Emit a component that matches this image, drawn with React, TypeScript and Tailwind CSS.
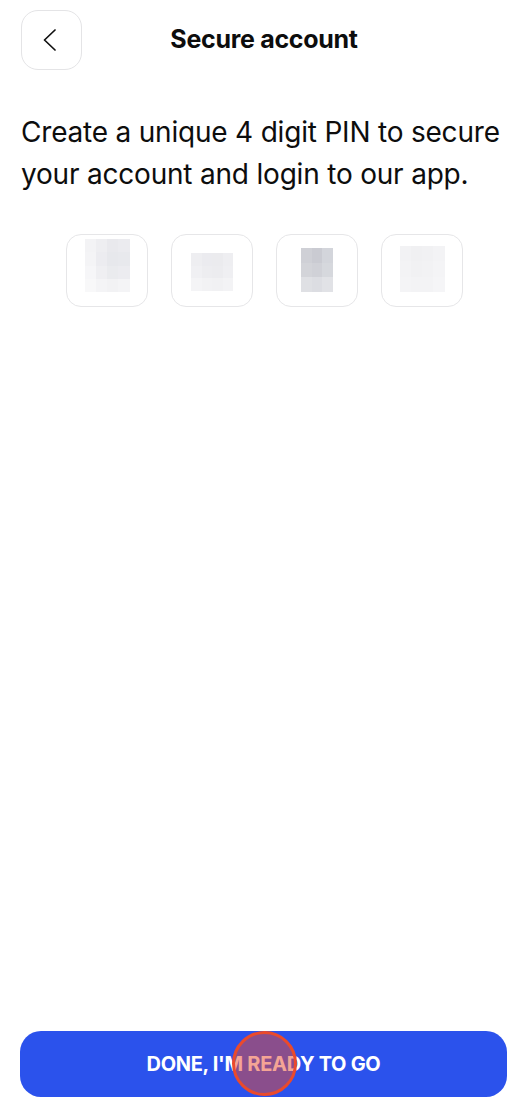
// blurred digit placeholders, rows of gray cells
const mosaics: { w: string; h: string; mt: string; cells: string[][] }[] = [
  {
    w: "w-[45px]",
    h: "h-[53px]",
    mt: "mt-[4px]",
    cells: [
      ["#f3f3f5", "#eeeef1", "#e9e9ed", "#ebebef"],
      ["#f4f4f6", "#ececf0", "#e7e8ec", "#e8e9ed"],
      ["#f6f6f8", "#efeff2", "#eaebee", "#ececf0"],
      ["#f8f8f9", "#f4f4f6", "#f2f2f4", "#f4f4f6"],
    ],
  },
  {
    w: "w-[42px]",
    h: "h-[38px]",
    mt: "mt-[18px]",
    cells: [
      ["#eeeef1", "#ebebef", "#ebebee", "#eeeef1"],
      ["#f0f0f3", "#ededf0", "#ececef", "#efeff2"],
      ["#f4f4f6", "#f2f2f4", "#f1f1f3", "#f3f3f5"],
    ],
  },
  {
    w: "w-[32px]",
    h: "h-[44px]",
    mt: "mt-[13px]",
    cells: [
      ["#cfd0d6", "#cacbd2", "#d3d5db"],
      ["#d3d4d9", "#d0d1d7", "#d6d8dd"],
      ["#dfe0e4", "#dcdde2", "#e1e2e6"],
    ],
  },
  {
    w: "w-[45px]",
    h: "h-[46px]",
    mt: "mt-[11px]",
    cells: [
      ["#f2f2f4", "#f0f0f2", "#f1f1f3", "#f3f3f5"],
      ["#f3f3f5", "#f1f1f3", "#f2f2f4", "#f4f4f6"],
      ["#f4f4f6", "#f3f3f5", "#f3f3f5", "#f5f5f7"],
    ],
  },
];

const PinBox = ({ m }: { m: (typeof mosaics)[number] }) => (
  <div className="w-[82px] h-[73px] rounded-[15px] border border-[#e6e6e8] flex justify-center bg-white">
    <div className={`${m.w} ${m.h} ${m.mt} flex flex-col`}>
      {m.cells.map((row, i) => (
        <div key={i} className="flex flex-1">
          {row.map((c, j) => (
            <div key={j} className="flex-1" style={{ backgroundColor: c }} />
          ))}
        </div>
      ))}
    </div>
  </div>
);

export default function App() {
  return (
    <div
      className="w-[528px] h-[1118px] bg-white flex flex-col text-[#0d0d0d]"
      style={{ fontFamily: "Inter, 'Liberation Sans', sans-serif" }}
    >
      {/* Header */}
      <div className="relative flex items-center h-[61px] mt-[9px] px-[21px]">
        <button className="w-[61px] h-[60px] rounded-[17px] border border-[#e4e4e6] flex items-center justify-center">
          <svg width="13" height="22" viewBox="0 0 13 22" fill="none" className="mr-[4px]">
            <polyline
              points="12,1 1.5,11 12,21"
              stroke="#111"
              strokeWidth="1.7"
              strokeLinecap="round"
              strokeLinejoin="round"
            />
          </svg>
        </button>
        <h1 className="absolute left-0 right-0 text-center text-[25px] font-bold tracking-[-0.3px] pointer-events-none">
          Secure account
        </h1>
      </div>

      {/* Description */}
      <p className="mt-[41px] px-[21px] text-[28px] leading-[42px] tracking-[-0.2px]">
        Create a unique 4 digit PIN to secure your account and login to our app.
      </p>

      {/* PIN inputs */}
      <div className="mt-[39px] flex justify-center gap-[23px] pl-[1px]">
        {mosaics.map((m, i) => (
          <PinBox key={i} m={m} />
        ))}
      </div>

      <div className="flex-1" />

      {/* CTA */}
      <div className="px-[20px] pb-[21px]">
        <button className="relative w-[487px] h-[66px] rounded-[21px] bg-[#2b52ec] text-white text-[20px] font-bold tracking-[-0.3px]">
          DONE, I'M READY TO GO
          <span className="absolute left-[212px] top-[0px] w-[65px] h-[65px] rounded-full border-[3px] border-[#ea4a2c] bg-[#ea4a2c]/50" />
        </button>
      </div>
    </div>
  );
}
